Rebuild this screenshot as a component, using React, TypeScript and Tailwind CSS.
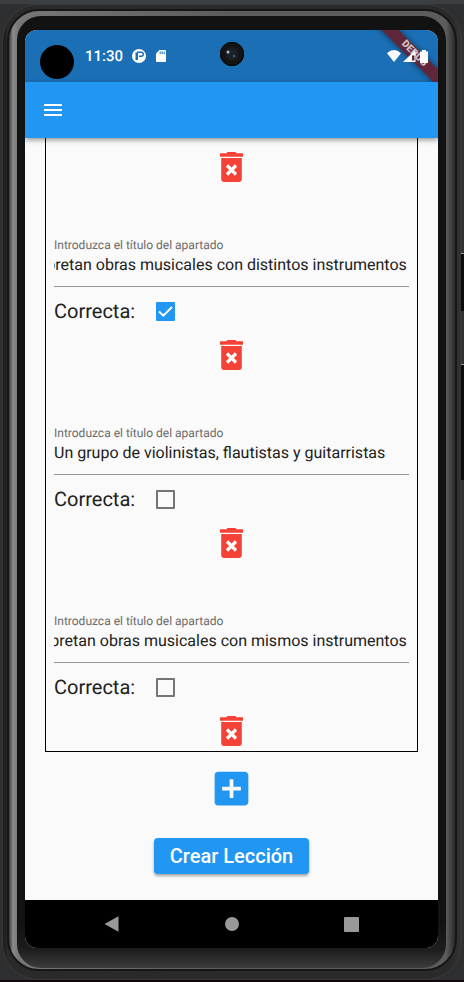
import { useLayoutEffect, useRef, useState } from "react";
import { MdAddBox, MdMenu } from "react-icons/md";

type Apartado = { id: string; titulo: string; correcta: boolean };

const inicial: Apartado[] = [
  { id: "a", titulo: "Interpretan obras musicales con distintos instrumentos", correcta: true },
  { id: "b", titulo: "Un grupo de violinistas, flautistas y guitarristas", correcta: false },
  { id: "c", titulo: "Interpretan obras musicales con mismos instrumentos", correcta: false },
];

function DeleteButton() {
  return (
    <button type="button" aria-label="Eliminar" className="mx-auto flex h-10 w-10 items-center justify-center">
      <svg viewBox="0 0 23 30" className="h-[30px] w-[23px]" aria-hidden="true">
        <path
          d="M7.500 0h8l1.200 1.200H23V4.800H0V1.200h6.300zM1.200 6h20.600v21a3 3 0 0 1-3 3H4.200a3 3 0 0 1-3-3z"
          fill="#f44336"
        />
        <path d="M7 13.500l9 9M16 13.500l-9 9" stroke="#fff" strokeWidth="3.200" fill="none" />
      </svg>
    </button>
  );
}

function ApartadoForm({ item }: { item: Apartado }) {
  const campo = useRef<HTMLInputElement>(null);
  const [titulo, setTitulo] = useState(item.titulo);
  const [correcta, setCorrecta] = useState(item.correcta);

  // Keep the end of a long title in view.
  useLayoutEffect(() => {
    const el = campo.current;
    if (!el) return;
    const alFinal = () => {
      el.scrollLeft = el.scrollWidth;
    };
    alFinal();
    document.fonts.ready.then(alFinal);
  }, []);

  return (
    <div className="flex flex-col pt-[50px]">
      <label htmlFor={`titulo-${item.id}`} className="text-xs leading-4 text-[#6b6b6b]">
        Introduzca el título del apartado
      </label>
      <div className="border-b border-[#959595] pr-0.5 pb-[9px]">
        <input
          ref={campo}
          id={`titulo-${item.id}`}
          type="text"
          value={titulo}
          onChange={(e) => setTitulo(e.target.value)}
          className="block h-6 w-full bg-transparent text-base text-[#212121] outline-none [text-rendering:geometricPrecision]"
        />
      </div>
      <div className="flex h-12 items-center gap-[21px]">
        <label htmlFor={`correcta-${item.id}`} className="text-xl text-[#212121]">
          Correcta:
        </label>
        <span className="grid">
          <input
            id={`correcta-${item.id}`}
            type="checkbox"
            checked={correcta}
            onChange={(e) => setCorrecta(e.target.checked)}
            className="peer col-start-1 row-start-1 h-[19px] w-[19px] appearance-none rounded-[1px] border-2 border-[#757575] checked:border-[#2196f3] checked:bg-[#2196f3]"
          />
          <svg
            viewBox="0 0 19 19"
            className="pointer-events-none invisible col-start-1 row-start-1 h-[19px] w-[19px] peer-checked:visible"
            fill="none"
            stroke="#fff"
            strokeWidth="2"
            aria-hidden="true"
          >
            <path d="M3 9.500l4.300 4.200L16 5" />
          </svg>
        </span>
      </div>
      <DeleteButton />
    </div>
  );
}

function StatusBar() {
  return (
    <div className="relative flex h-[52px] items-center bg-[#1a6fb5] px-[15px] text-white">
      <span className="mt-3 h-[34px] w-[34px] rounded-full bg-black" />
      <span className="ml-[11px] text-[15px] font-medium">11:30</span>
      <svg viewBox="0 0 14 14" className="ml-[9px] h-3.5 w-3.5" aria-hidden="true">
        <circle cx="7" cy="7" r="7" fill="#fff" />
        <path d="M3.500 3.500v7.500h2.500V3.500z" fill="#1a6fb5" />
        <path d="M5 3.200h4.300a1.900 1.900 0 0 1 0 4H7" stroke="#1a6fb5" strokeWidth="1.400" fill="none" />
      </svg>
      <svg viewBox="0 0 10 12" className="ml-2.5 h-3 w-2.5" aria-hidden="true">
        <path d="M3.500 0H9q1 0 1 1v10q0 1-1 1H1q-1 0-1-1V3.500z" fill="#fff" />
        <path d="M4.200 1.500v2.500M6.200 1.500v2.500M8.200 1.500v2.500" stroke="#1a6fb5" />
      </svg>
      <div className="absolute top-3 left-1/2 h-6 w-6 -translate-x-1/2 rounded-full bg-[#0a0a0a]">
        <svg viewBox="0 0 24 24" aria-hidden="true">
          <circle cx="12" cy="12" r="11.500" fill="#141414" stroke="#050505" />
          <circle cx="12" cy="12" r="7" fill="#1c1c1e" />
          <circle cx="12" cy="12" r="4.500" fill="#1a2430" />
          <circle cx="8" cy="10" r="1.500" fill="#b9bcc0" />
          <circle cx="14" cy="14" r="1" fill="#3c76a8" />
        </svg>
      </div>
      <div className="absolute top-[18px] -right-6 h-3 w-24 rotate-45 bg-[#5f2739] text-center text-[10px] leading-3 font-black text-[#d2c2c8] shadow-[0_0_6px_rgba(0,0,0,0.5)]">
        DEBUG
      </div>
      <div className="relative ml-auto -mr-[7px] flex items-center gap-0.5">
        <svg viewBox="0 0 14 12" className="h-3 w-3.5" fill="#fff" aria-hidden="true">
          <path d="M0 3.200Q7-3 14 3.200L7 12z" />
        </svg>
        <svg viewBox="0 0 13 12" className="h-3 w-[13px]" aria-hidden="true">
          <path d="M0 12L12.500 0v12z" fill="#fff" />
          <path d="M9 5.500h2.500v5H9z" fill="#5f2739" />
        </svg>
        <svg viewBox="0 0 12 13" className="h-[13px] w-3" fill="#fff" aria-hidden="true">
          <path d="M4 0h4v1.500h2V13H2V1.500h2z" />
        </svg>
      </div>
    </div>
  );
}

function NavBar() {
  return (
    <nav className="flex h-12 items-center justify-around bg-black px-[27px]">
      <button type="button" aria-label="Atrás">
        <svg viewBox="0 0 16 16" className="h-4 w-4" fill="#999" aria-hidden="true">
          <path d="M0.500 8L14.500 0.300v15.400z" />
        </svg>
      </button>
      <button type="button" aria-label="Inicio" className="h-3.5 w-3.5 rounded-full bg-[#999]" />
      <button type="button" aria-label="Recientes" className="h-[15px] w-[15px] rounded-[1px] bg-[#999]" />
    </nav>
  );
}

export default function App() {
  return (
    <div className="relative flex min-h-screen flex-col border-t-4 border-b-2 border-t-[#3c3f41] border-b-[#12060c] bg-[#2d2f31] px-0.5 font-['Roboto',sans-serif] [text-rendering:geometricPrecision]">
      <div className="absolute top-[249px] right-0 h-[58px] w-[3px] border-t border-[#999] bg-[#0c0c0c]" />
      <div className="absolute top-[360px] right-0 h-[116px] w-[3px] border-t border-[#999] bg-[#0c0c0c]" />
      <div className="flex grow flex-col rounded-[36px] border border-[#3a3a3a] bg-[linear-gradient(90deg,#1c1c1c,#2a2a2a_5px,#2a2a2a_98%,#333)] px-1 pt-1 pb-2">
        <div className="flex grow flex-col rounded-[32px] border-2 border-[#161616] bg-[linear-gradient(90deg,#3a3a3a,#8a8a8a_4px,#777_9px,#5c5c5c_50%,#5c5c5c_98%,#2a2a2a)] pt-[5px] pr-[9px] pb-px pl-2">
          <div className="flex grow flex-col rounded-[24px] bg-linear-to-b from-[#121212] from-95% via-[#1c1c1c] via-98% to-[#3c3c3c] px-2 pt-3.5 pb-5">
            <div className="flex grow flex-col overflow-hidden rounded-xl bg-[#fafafa]">
              <StatusBar />
              <header className="relative flex h-14 items-center bg-[#2196f3] px-4 shadow-[0_2px_5px_rgba(0,0,0,0.4)]">
                <button type="button" aria-label="Menú" className="text-white">
                  <MdMenu className="h-6 w-6" />
                </button>
              </header>
              <main className="flex grow flex-col items-center px-5">
                <section className="w-full border border-t-0 border-black px-2 pt-[9px]">
                  <DeleteButton />
                  {inicial.map((item) => (
                    <ApartadoForm key={item.id} item={item} />
                  ))}
                </section>
                <button type="button" aria-label="Añadir apartado" className="mt-3.5 text-[#2196f3]">
                  <MdAddBox className="h-[45px] w-[45px]" />
                </button>
                <button
                  type="button"
                  className="mt-[27px] h-9 rounded-sm bg-[#2196f3] px-4 text-xl font-medium text-white shadow-[0_2px_3px_rgba(0,0,0,0.35)]"
                >
                  Crear Lección
                </button>
              </main>
              <NavBar />
            </div>
          </div>
        </div>
      </div>
    </div>
  );
}
